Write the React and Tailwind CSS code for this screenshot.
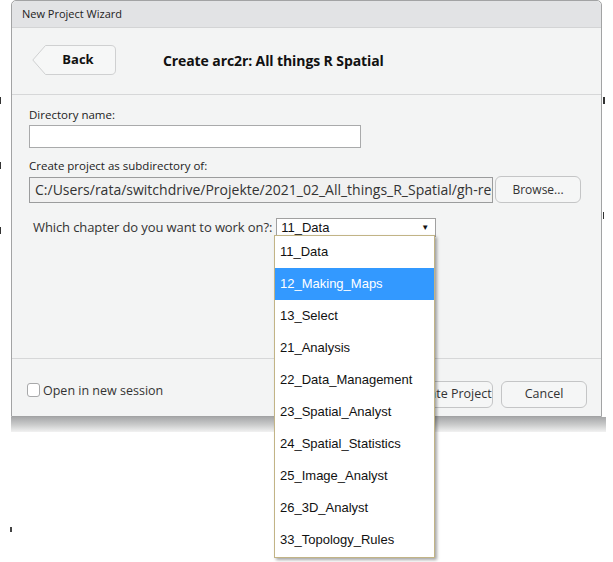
import React from "react"

const chapters = [
    "11_Data",
    "12_Making_Maps",
    "13_Select",
    "21_Analysis",
    "22_Data_Management",
    "23_Spatial_Analyst",
    "24_Spatial_Statistics",
    "25_Image_Analyst",
    "26_3D_Analyst",
    "33_Topology_Rules",
]

function BackButton() {
    return (
        <div className="relative w-[84px] h-[30px] flex items-center justify-center pl-[8px]">
            <svg className="absolute inset-0" width="84" height="30" viewBox="0 0 84 30">
                <path d="M13.5 0.5 H79 Q83.5 0.5 83.5 5 V25 Q83.5 29.5 79 29.5 H13.5 L0.8 15 Z" fill="#f6f7f7" stroke="#cfd0d1" />
            </svg>
            <span className="relative text-[13px] font-bold text-[#111]">Back</span>
        </div>
    )
}

export default function App() {
    return (
        <div className="relative w-[613px] h-[562px] bg-white overflow-hidden" style={{ fontFamily: '"Open Sans", "Noto Sans", sans-serif' }}>
            {/* stray marks from the window behind */}
            <div className="absolute left-0 top-[97px] w-[1px] h-[7px] bg-[#333]" />
            <div className="absolute left-0 top-[162px] w-[1px] h-[7px] bg-[#333]" />
            <div className="absolute left-0 top-[227px] w-[1px] h-[7px] bg-[#333]" />
            <div className="absolute left-[603px] top-[97px] w-[2px] h-[7px] bg-[#333]" />
            <div className="absolute left-[603px] top-[212px] w-[1px] h-[7px] bg-[#333]" />
            <div className="absolute left-[10px] top-[527px] w-[2px] h-[5px] bg-[#444]" />

            {/* dialog */}
            <div className="ml-[11px] w-[591px] h-[417px] border border-[#a2a3a4] rounded-t-[5px] bg-[#f3f4f4] flex flex-col">
                <div className="h-[27px] bg-[#e2e3e5] border-b border-[#d3d4d5] rounded-t-[5px] flex items-center pl-[10px] text-[11px] text-[#222]">
                    New Project Wizard
                </div>

                <div className="h-[67px] border-b border-[#d6d7d8] flex items-center pl-[20px] pb-[2px]">
                    <BackButton />
                    <div className="ml-[47px] text-[14px] font-bold text-[#111] tracking-[-0.1px]">Create arc2r: All things R Spatial</div>
                </div>

                <div className="h-[264px] border-b border-[#d6d7d8] pl-[17px] pt-[12px] text-[#222]">
                    <div className="text-[11.5px] leading-[15px]">Directory name:</div>
                    <div className="mt-[3px] w-[332px] h-[23px] bg-white border border-[#a9aaab]" />
                    <div className="mt-[10px] text-[11.5px] leading-[15px]">Create project as subdirectory of:</div>
                    <div className="mt-[3px] flex items-center">
                        <div className="w-[464px] h-[26px] bg-[#f1f1f1] border border-[#9b9c9d] overflow-hidden whitespace-nowrap pl-[5px] text-[14px] leading-[24px] text-[#333]">
                            C:/Users/rata/switchdrive/Projekte/2021_02_All_things_R_Spatial/gh-repo
                        </div>
                        <div className="ml-[2px] w-[86px] h-[27px] rounded-[6px] border border-[#c4c5c6] bg-[#f5f6f6] flex items-center justify-center text-[12px] text-[#333]">
                            Browse...
                        </div>
                    </div>
                    <div className="mt-[15px] flex items-center pl-[4px]">
                        <div className="text-[13px] text-[#333] tracking-[-0.1px]">Which chapter do you want to work on?:</div>
                        <div className="ml-[4px] w-[160px] h-[19px] bg-white border border-[#a0a0a0] flex items-center justify-between pl-[4px] pr-[6px]" style={{ fontFamily: '"Liberation Sans", Arial, sans-serif' }}>
                            <span className="text-[13px] text-[#111]">11_Data</span>
                            <span className="text-[8px] text-[#111]">▼</span>
                        </div>
                    </div>
                </div>

                <div className="flex-1 flex items-start pt-[22px] pl-[15px] pr-[14px]">
                    <div className="mt-[2px] w-[13px] h-[14px] rounded-[3px] border border-[#a8a9aa] bg-white" />
                    <div className="ml-[3px] mt-[1px] text-[12.5px] text-[#333]">Open in new session</div>
                    <div className="ml-auto w-[85px] h-[27px] rounded-[6px] border border-[#c4c5c6] bg-[#f5f6f6] flex items-center justify-center text-[12.5px] text-[#333]">
                        Create Project
                    </div>
                    <div className="ml-[8px] w-[86px] h-[27px] rounded-[6px] border border-[#c4c5c6] bg-[#f5f6f6] flex items-center justify-center text-[12.5px] text-[#333]">
                        Cancel
                    </div>
                </div>
            </div>
            <div className="ml-[11px] w-[595px] h-[15px] bg-gradient-to-b from-[#a7a8a9] via-[#c9caca] to-[#f2f2f2]" />

            {/* open select list */}
            <div
                className="absolute left-[274px] top-[235px] w-[161px] h-[323px] bg-white border border-[#c2b486] shadow-[2px_2px_3px_rgba(0,0,0,0.35)] flex flex-col"
                style={{ fontFamily: '"Liberation Sans", Arial, sans-serif' }}
            >
                {chapters.map((c, i) => (
                    <div
                        key={c}
                        className={`h-[32px] flex items-center pl-[5px] text-[13px] ${i === 1 ? "bg-[#3399ff] text-white" : "text-[#111]"}`}
                    >
                        {c}
                    </div>
                ))}
            </div>
        </div>
    )
}
